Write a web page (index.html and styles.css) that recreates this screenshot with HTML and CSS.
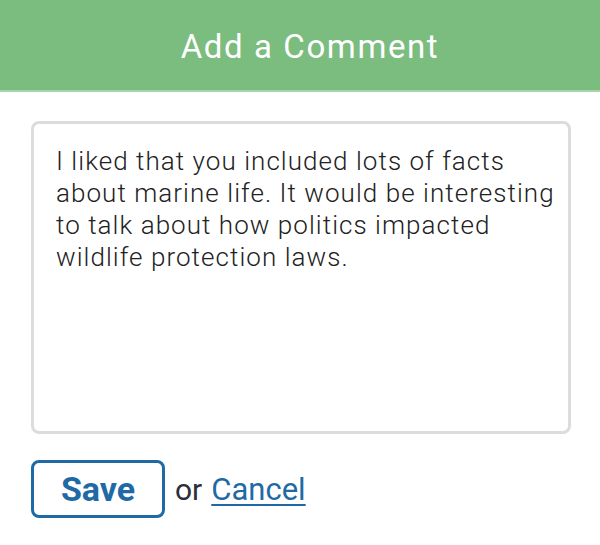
FILE: index.html
```html
<!DOCTYPE html>
<html>
<head>
<meta charset="utf-8">
<link rel="stylesheet" href="styles.css">
</head>
<body>
<header class="header"><h1 class="title">Add a Comment</h1></header>
<main class="main">
  <div class="box">I liked that you included lots of facts about marine life. It would be interesting to talk about how politics impacted wildlife protection laws.</div>
  <div class="actions">
    <button class="save">Save</button>
    <span class="or">or</span>
    <a class="cancel" href="#">Cancel</a>
  </div>
</main>
</body>
</html>
```
FILE: styles.css
```css
html, body { margin: 0; padding: 0; background: #fff; }
body { font-family: Roboto, "Noto Sans", sans-serif; width: 600px; }
.header {
  height: 90px;
  background: #7bbc7f;
  border-bottom: 2px solid #a9d4ab;
  display: flex;
  align-items: center;
  justify-content: center;
  padding-left: 20px;
}
.title {
  margin: 0;
  color: #fff;
  font-weight: 400;
  font-size: 33px;
  letter-spacing: 1.6px;
  padding-top: 3px;
}
.main { padding: 29px 29px 0 31px; }
.box {
  box-sizing: border-box;
  height: 313px;
  border: 3px solid #dcdcdc;
  border-radius: 8px;
  padding: 21px 6px 21px 22px;
  font-size: 26px;
  font-weight: 300;
  line-height: 32px;
  color: #222;
  letter-spacing: 1.05px;
}
.actions {
  display: flex;
  align-items: center;
  margin-top: 26px;
}
.save {
  box-sizing: border-box;
  width: 134px;
  height: 58px;
  border: 3px solid #1f6aa5;
  border-radius: 8px;
  background: #fff;
  color: #1f6aa5;
  font-family: Roboto, sans-serif;
  font-weight: 700;
  font-size: 34px;
  padding: 0;
}
.or {
  margin-left: 10px;
  font-size: 30px;
  color: #2a2f3a;
}
.cancel {
  margin-left: 9px;
  font-size: 31px;
  color: #1f6aa5;
  text-decoration: underline;
  text-underline-offset: 4px;
  text-decoration-thickness: 2px;
}
```
